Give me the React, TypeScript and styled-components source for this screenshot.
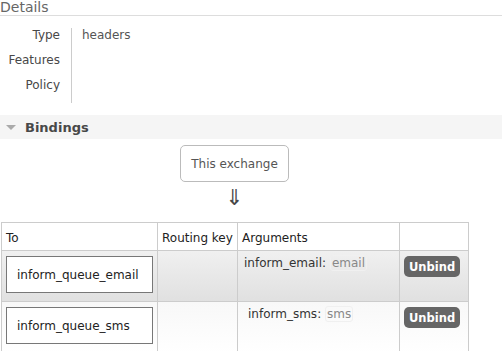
import React from 'react';
import styled, { createGlobalStyle } from 'styled-components';

const GlobalStyle = createGlobalStyle`
  html, body {
    margin: 0;
    padding: 0;
    background: #fff;
  }
  body {
    font-family: 'DejaVu Sans', Verdana, sans-serif;
    font-size: 12px;
    color: #484848;
    overflow: hidden;
  }
`;

const bindings = [
  { queue: 'inform_queue_email', key: 'inform_email', value: 'email', alt: true, indent: 0 },
  { queue: 'inform_queue_sms', key: 'inform_sms', value: 'sms', alt: false, indent: 4 },
];

function App(): React.ReactElement {
  return (
    <>
      <GlobalStyle />
      <Page>
        <SectionTitle>Details</SectionTitle>
        <Facts>
          <FactLabel>Type</FactLabel>
          <FactValue>headers</FactValue>
          <FactLabel>Features</FactLabel>
          <FactValue />
          <FactLabel>Policy</FactLabel>
          <FactValue />
        </Facts>
        <SectionBar>
          <Triangle />
          Bindings
        </SectionBar>
        <Flow>
          <Source>This exchange</Source>
          <Arrow>⇓</Arrow>
        </Flow>
        <BindingTable>
          <colgroup>
            <col style={{ width: 156 }} />
            <col style={{ width: 80 }} />
            <col style={{ width: 162 }} />
            <col style={{ width: 69 }} />
          </colgroup>
          <thead>
            <tr>
              <Th>To</Th>
              <Th>Routing key</Th>
              <Th>Arguments</Th>
              <Th />
            </tr>
          </thead>
          <tbody>
            {bindings.map((b) => (
              <Row key={b.queue} $alt={b.alt}>
                <Td>
                  <QueueBox>{b.queue}</QueueBox>
                </Td>
                <Td />
                <ArgCell $indent={b.indent}>
                  <ArgKey>{b.key}:</ArgKey> <ArgValue>{b.value}</ArgValue>
                </ArgCell>
                <Td>
                  <UnbindButton>Unbind</UnbindButton>
                </Td>
              </Row>
            ))}
          </tbody>
        </BindingTable>
      </Page>
    </>
  );
}

export default App;

const Page = styled.div`
  width: 502px;
  height: 351px;
  overflow: hidden;
`;

const SectionTitle = styled.h2`
  margin: 0;
  height: 15px;
  font-size: 14px;
  font-weight: normal;
  line-height: 14px;
  color: #666;
  border-bottom: 1px solid #ddd;
`;

const Facts = styled.div`
  display: grid;
  grid-template-columns: 72px auto;
  grid-auto-rows: 25px;
  margin-top: 12px;
  line-height: 14px;
`;

const FactLabel = styled.div`
  text-align: right;
  padding-right: 11px;
  border-right: 1px solid #ccc;
  color: #484848;
`;

const FactValue = styled.div`
  padding-left: 10px;
  color: #555;
`;

const SectionBar = styled.div`
  display: flex;
  align-items: center;
  height: 24px;
  margin-top: 12px;
  background: #f5f5f5;
  font-size: 13px;
  font-weight: bold;
  color: #484848;
`;

const Triangle = styled.span`
  width: 0;
  height: 0;
  margin: 1px 9px 0 6px;
  border-left: 5px solid transparent;
  border-right: 5px solid transparent;
  border-top: 5px solid #aaa;
`;

const Flow = styled.div`
  width: 467px;
  margin-left: 1px;
  display: flex;
  flex-direction: column;
  align-items: center;
  padding-top: 6px;
`;

const Source = styled.div`
  box-sizing: border-box;
  height: 37px;
  padding: 0 10px;
  display: flex;
  align-items: center;
  border: 1px solid #bbb;
  border-radius: 5px;
  color: #555;
`;

const Arrow = styled.div`
  height: 40px;
  font-size: 22px;
  line-height: 32px;
  color: #484848;
`;

const BindingTable = styled.table`
  border-collapse: collapse;
  table-layout: fixed;
  width: 467px;
  margin-left: 1px;
`;

const Th = styled.th`
  height: 25px;
  padding: 2px 4px 0;
  border: 1px solid #ccc;
  text-align: left;
  font-weight: normal;
  color: #222;
  background: #fff;
`;

const Row = styled.tr<{ $alt: boolean }>`
  background: ${(p) =>
    p.$alt
      ? 'linear-gradient(to bottom, #f0f0f0, #e0e0e0)'
      : 'linear-gradient(to bottom, #f8f8f8, #ffffff)'};
`;

const Td = styled.td`
  height: 50px;
  box-sizing: border-box;
  padding: 5px 4px 8px;
  border: 1px solid #ccc;
  vertical-align: top;
  color: #333;
`;

const ArgCell = styled(Td)<{ $indent: number }>`
  padding-left: ${(p) => 6 + p.$indent}px;
`;

const QueueBox = styled.div`
  box-sizing: border-box;
  height: 37px;
  padding: 0 10px;
  display: flex;
  align-items: center;
  border: 1px solid #777;
  background: #fff;
  color: #222;
`;

const ArgKey = styled.span`
  color: #333;
`;

const ArgValue = styled.span`
  color: #888;
  padding: 0 1px;
  border: 1px solid #f0f0f0;
  border-radius: 3px;
`;

const UnbindButton = styled.button`
  height: 21px;
  padding: 0 5px;
  border: none;
  border-radius: 5px;
  background: #666;
  color: #fff;
  font-family: 'DejaVu Sans', Verdana, sans-serif;
  font-size: 11.5px;
  font-weight: bold;
  cursor: pointer;
`;
